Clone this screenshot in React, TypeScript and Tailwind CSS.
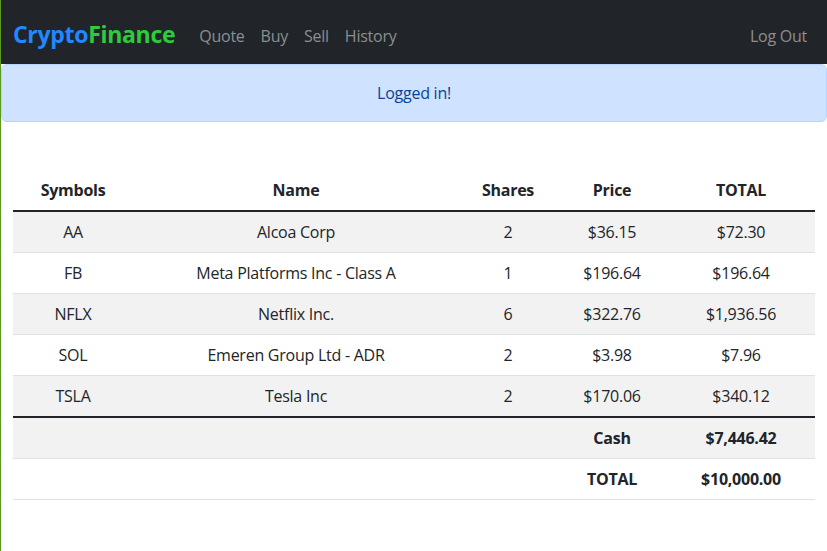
import React from "react";

const rows = [
  { s: "AA", n: "Alcoa Corp", sh: "2", p: "$36.15", t: "$72.30" },
  { s: "FB", n: "Meta Platforms Inc - Class A", sh: "1", p: "$196.64", t: "$196.64" },
  { s: "NFLX", n: "Netflix Inc.", sh: "6", p: "$322.76", t: "$1,936.56" },
  { s: "SOL", n: "Emeren Group Ltd - ADR", sh: "2", p: "$3.98", t: "$7.96" },
  { s: "TSLA", n: "Tesla Inc", sh: "2", p: "$170.06", t: "$340.12" },
];

export default function App() {
  return (
    <div
      className="min-h-screen border-l border-l-[#5b9a1e] bg-white text-[#212529] text-[16px] leading-6 tracking-[-0.25px]"
      style={{ fontFamily: '"Open Sans", "Noto Sans", sans-serif' }}
    >
      <nav className="h-16 bg-[#212529] flex items-center px-3">
        <a className="text-[23px] font-bold mr-4 tracking-[-0.3px] pt-1">
          <span className="text-[#2089ff]">Crypto</span>
          <span className="text-[#2ecc3c]">Finance</span>
        </a>
        <div className="flex items-center text-[#8c8e91] pt-2">
          <span className="px-2">Quote</span>
          <span className="px-2">Buy</span>
          <span className="px-2">Sell</span>
          <span className="px-2">History</span>
        </div>
        <div className="ml-auto text-[#8c8e91] px-2 pt-2">Log Out</div>
      </nav>
      <div className="h-[58px] bg-[#cfe2ff] border border-[#b6d4fe] rounded-md text-[#084298] flex items-center justify-center">
        Logged in!
      </div>
      <div className="px-3 pt-12">
        <table className="w-[802px] border-collapse table-fixed text-center">
          <colgroup>
            <col className="w-[120px]" />
            <col className="w-[326px]" />
            <col className="w-[98px]" />
            <col className="w-[110px]" />
            <col className="w-[148px]" />
          </colgroup>
          <thead>
            <tr className="border-b-2 border-b-[#212529]">
              <th className="py-2 font-bold">Symbols</th>
              <th className="py-2 font-bold">Name</th>
              <th className="py-2 font-bold">Shares</th>
              <th className="py-2 font-bold">Price</th>
              <th className="py-2 font-bold">TOTAL</th>
            </tr>
          </thead>
          <tbody>
            {rows.map((r, i) => (
              <tr
                key={r.s}
                className={
                  i === rows.length - 1
                    ? "bg-[#f2f2f2]"
                    : i % 2 === 0
                    ? "bg-[#f2f2f2] border-b border-b-[#dee2e6]"
                    : "border-b border-b-[#dee2e6]"
                }
              >
                <td className="py-2">{r.s}</td>
                <td className="py-2">{r.n}</td>
                <td className="py-2">{r.sh}</td>
                <td className="py-2">{r.p}</td>
                <td className="py-2">{r.t}</td>
              </tr>
            ))}
          </tbody>
          <tfoot className="font-bold">
            <tr className="border-t-2 border-t-[#212529] bg-[#f2f2f2] border-b border-b-[#dee2e6]">
              <td className="py-2"></td>
              <td className="py-2"></td>
              <td className="py-2"></td>
              <td className="py-2">Cash</td>
              <td className="py-2">$7,446.42</td>
            </tr>
            <tr className="border-b border-b-[#dee2e6]">
              <td className="py-2"></td>
              <td className="py-2"></td>
              <td className="py-2"></td>
              <td className="py-2">TOTAL</td>
              <td className="py-2">$10,000.00</td>
            </tr>
          </tfoot>
        </table>
      </div>
    </div>
  );
}
